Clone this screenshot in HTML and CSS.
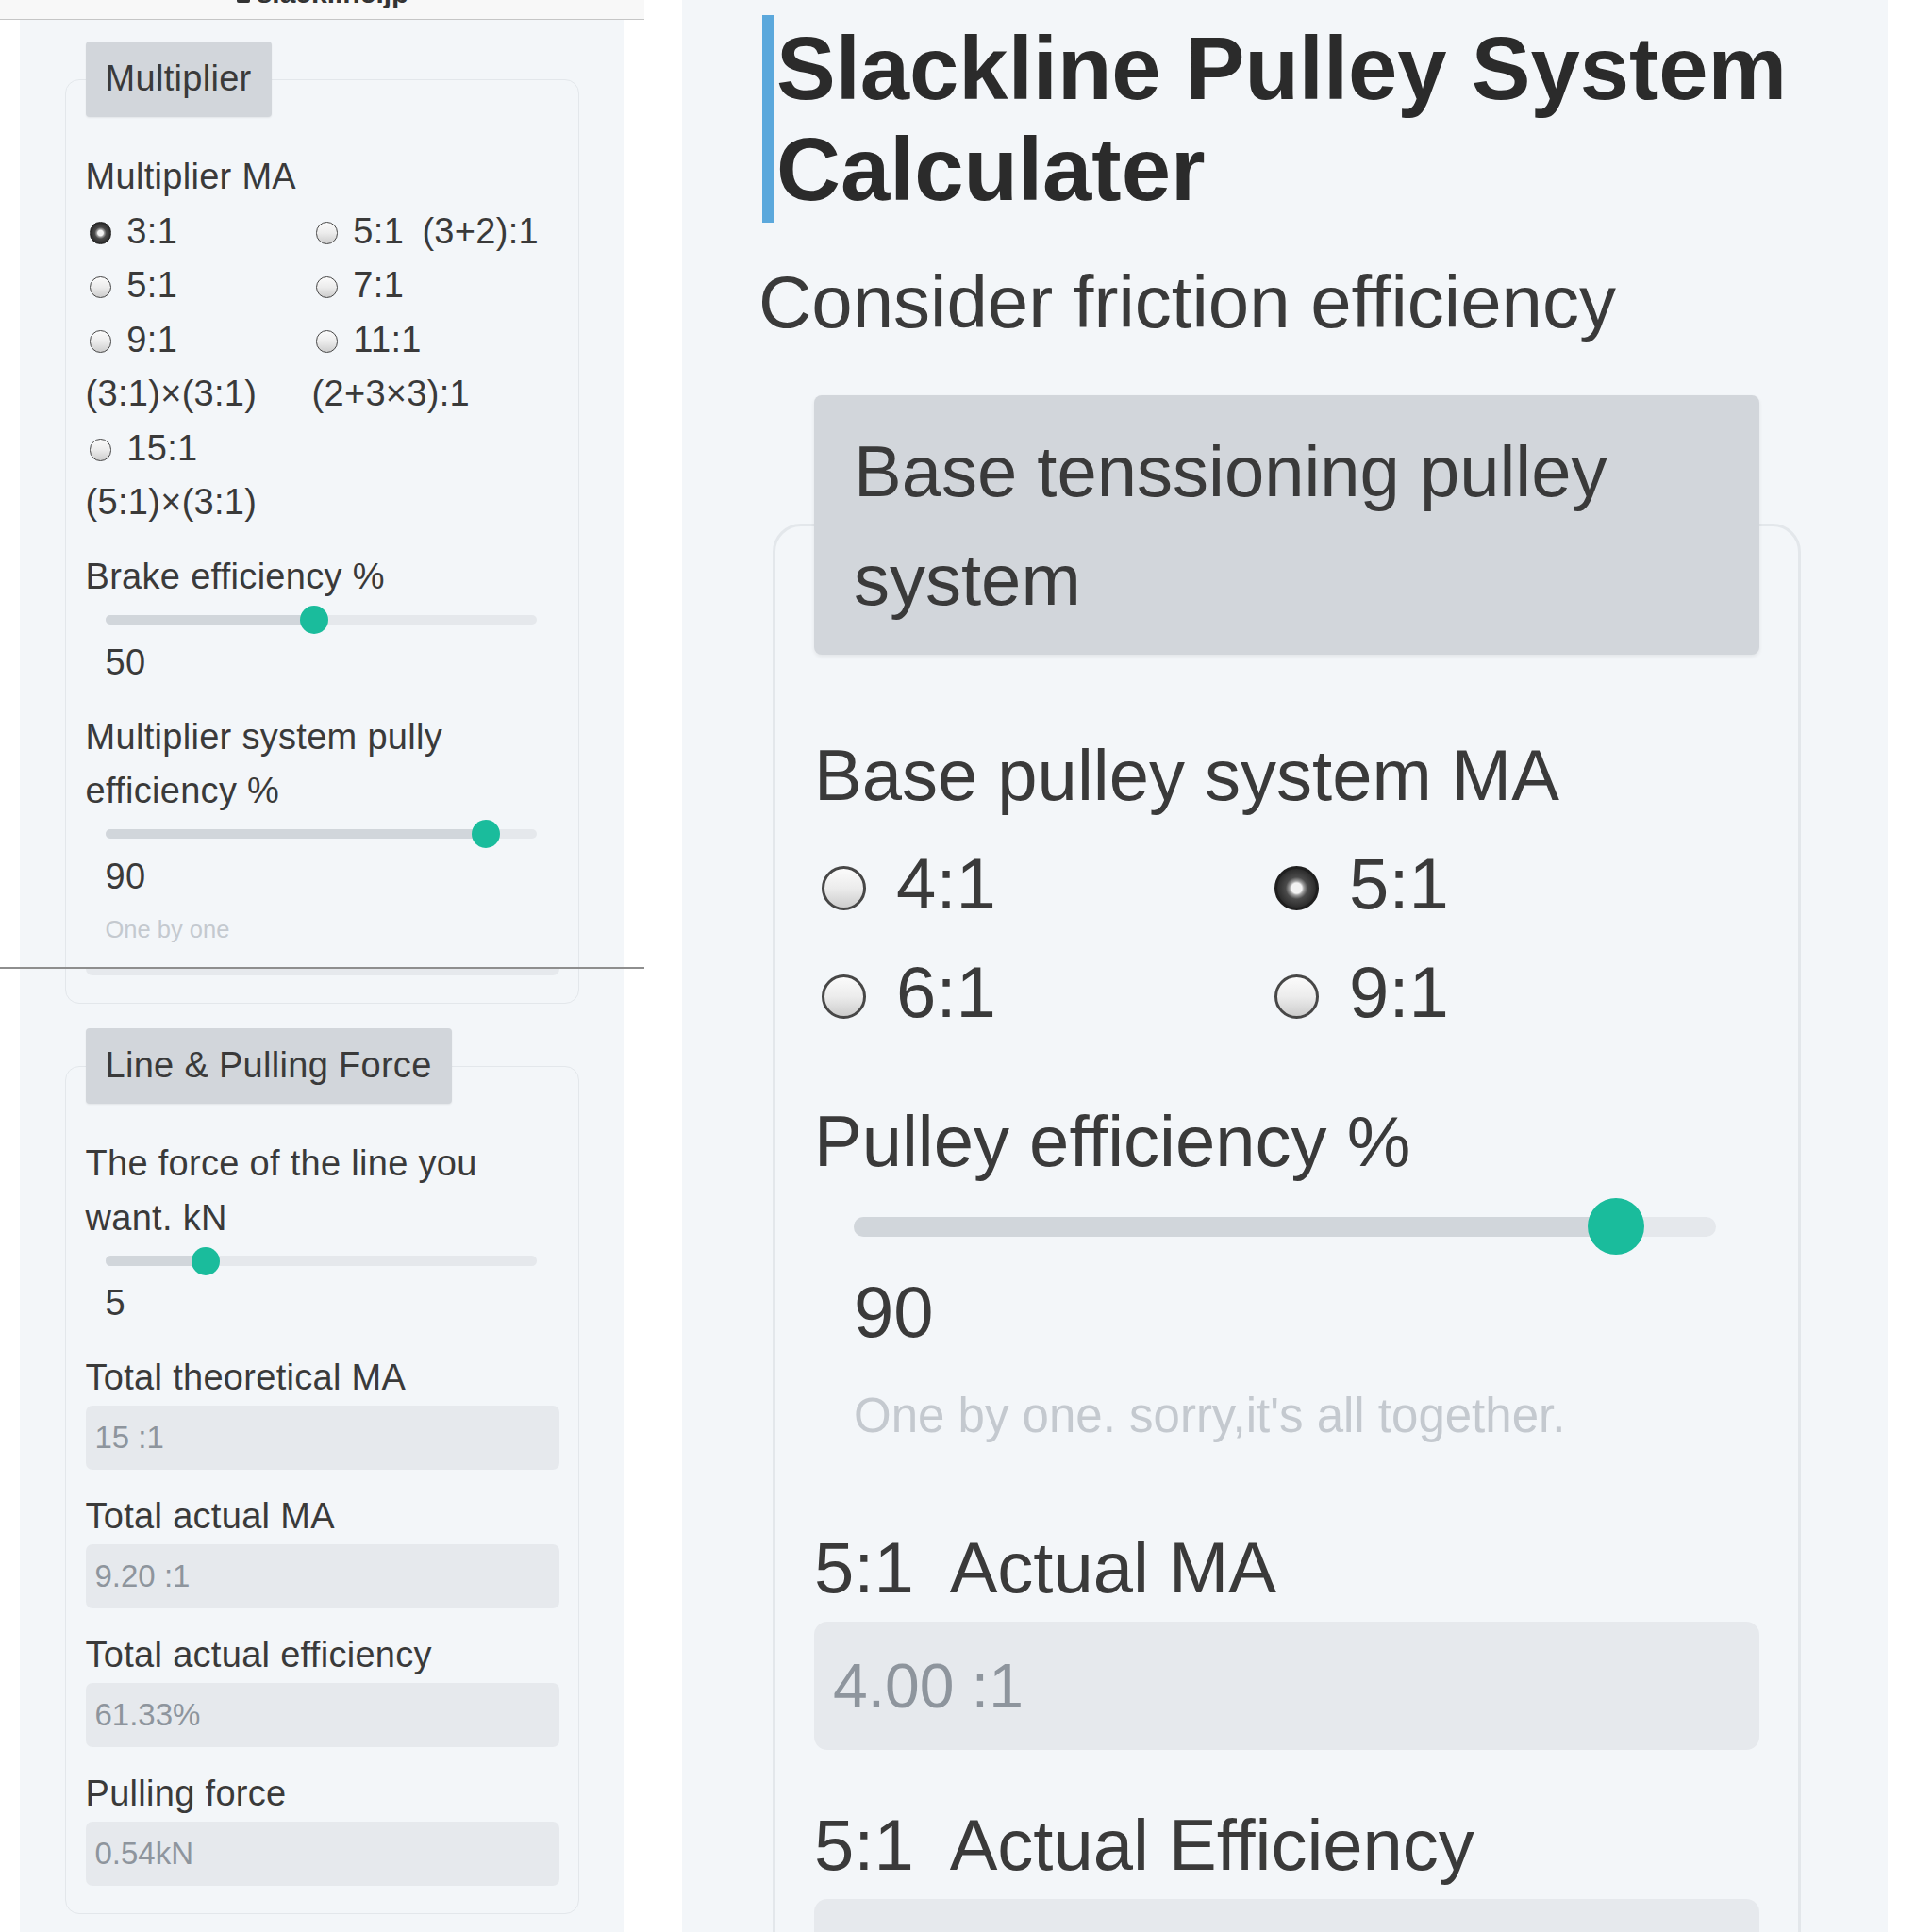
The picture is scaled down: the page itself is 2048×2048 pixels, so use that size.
FILE: index.html
```html
<!DOCTYPE html>
<html lang="en">
<head>
<meta charset="utf-8">
<title>Slackline Pulley System Calculater</title>
<link rel="stylesheet" href="styles.css">
</head>
<body>
<div class="canvas">
  <section class="phone phone-left">
    <div class="urlbar">
      <span class="url"><svg class="lock" viewBox="0 0 16 20" width="16" height="20"><rect x="1" y="8" width="14" height="11" rx="2" fill="#333"/><path d="M4 8V5.5a4 4 0 0 1 8 0V8" fill="none" stroke="#333" stroke-width="2"/></svg> slackline.jp</span>
    </div>
    <div class="page page-left">
      <fieldset class="card">
        <legend class="card-title">Multiplier</legend>
        <div class="group">
          <div class="label">Multiplier MA</div>
          <div class="radios">
            <label class="opt"><input type="radio" name="mul" class="radio" checked> 3:1</label>
            <label class="opt"><input type="radio" name="mul" class="radio"> 5:1&ensp;(3+2):1</label>
            <label class="opt"><input type="radio" name="mul" class="radio"> 5:1</label>
            <label class="opt"><input type="radio" name="mul" class="radio"> 7:1</label>
            <label class="opt"><input type="radio" name="mul" class="radio"> 9:1 (3:1)×(3:1)</label>
            <label class="opt"><input type="radio" name="mul" class="radio"> 11:1 (2+3×3):1</label>
            <label class="opt"><input type="radio" name="mul" class="radio"> 15:1 (5:1)×(3:1)</label>
          </div>
        </div>
        <div class="group">
          <div class="label">Brake efficiency %</div>
          <div class="slider"><div class="track"><div class="fill" style="width:48.4%"></div></div><div class="thumb" style="left:48.4%"></div></div>
          <div class="value">50</div>
        </div>
        <div class="group">
          <div class="label">Multiplier system pully efficiency %</div>
          <div class="slider"><div class="track"><div class="fill" style="width:88.4%"></div></div><div class="thumb" style="left:88.4%"></div></div>
          <div class="value">90</div>
          <div class="hint">One by one</div>
          <div class="stub"></div>
        </div>
      </fieldset>

      <fieldset class="card card-next">
        <legend class="card-title">Line &amp; Pulling Force</legend>
        <div class="group">
          <div class="label">The force of the line you want. kN</div>
          <div class="slider"><div class="track"><div class="fill" style="width:23.4%"></div></div><div class="thumb" style="left:23.4%"></div></div>
          <div class="value">5</div>
        </div>
        <div class="group">
          <div class="label">Total theoretical MA</div>
          <div class="out">15 :1</div>
        </div>
        <div class="group">
          <div class="label">Total actual MA</div>
          <div class="out">9.20 :1</div>
        </div>
        <div class="group">
          <div class="label">Total actual efficiency</div>
          <div class="out">61.33%</div>
        </div>
        <div class="group">
          <div class="label">Pulling force</div>
          <div class="out">0.54kN</div>
        </div>
      </fieldset>
    </div>
    <div class="seam"></div>
  </section>

  <section class="phone phone-right">
    <div class="page page-right">
      <h1 class="title">Slackline Pulley System Calculater</h1>
      <p class="sub">Consider friction efficiency</p>
      <fieldset class="card">
        <legend class="card-title">Base tenssioning pulley system</legend>
        <div class="group">
          <div class="label">Base pulley system MA</div>
          <div class="radios">
            <label class="opt"><input type="radio" name="base" class="radio"> 4:1</label>
            <label class="opt"><input type="radio" name="base" class="radio" checked> 5:1</label>
            <label class="opt"><input type="radio" name="base" class="radio"> 6:1</label>
            <label class="opt"><input type="radio" name="base" class="radio"> 9:1</label>
          </div>
        </div>
        <div class="group">
          <div class="label">Pulley efficiency %</div>
          <div class="slider"><div class="track"><div class="fill" style="width:88.4%"></div></div><div class="thumb" style="left:88.4%"></div></div>
          <div class="value">90</div>
          <div class="hint">One by one. sorry,it's all together.</div>
        </div>
        <div class="group">
          <div class="label">5:1&ensp;Actual MA</div>
          <div class="out">4.00 :1</div>
        </div>
        <div class="group">
          <div class="label">5:1&ensp;Actual Efficiency</div>
          <div class="out"></div>
        </div>
      </fieldset>
    </div>
  </section>
</div>
</body>
</html>
```

FILE: styles.css
```css
* { box-sizing: border-box; }

html, body {
  margin: 0;
  padding: 0;
  background: #ffffff;
}

body {
  font-family: "Liberation Sans", Arial, sans-serif;
  color: #3a3a3a;
}

.canvas {
  width: 2048px;
  height: 2048px;
  display: flex;
  overflow: hidden;
  background: #ffffff;
}

.phone {
  flex: none;
  height: 2048px;
  overflow: hidden;
}

.phone-left {
  --u: 1px;
  --ls: 0.3px;
  width: 683px;
  position: relative;
}

.phone-right {
  --u: 2px;
  --ls: 0px;
  width: 1278px;
  margin-left: 40px;
  background: #f3f6f9;
}

/* browser url bar (cut off at top) */
.urlbar {
  height: 20.5px;
  background: #f8f8f8;
  border-bottom: 1.5px solid #c6c6c6;
  display: flex;
  justify-content: center;
  align-items: flex-start;
  overflow: hidden;
}

.url {
  font-size: 30px;
  line-height: 30px;
  height: 30px;
  margin-top: -22px;
  font-weight: bold;
  color: #333;
  display: flex;
  align-items: flex-end;
  gap: 6px;
}

.lock {
  display: block;
  margin-bottom: 4px;
}

.seam {
  position: absolute;
  left: 0;
  top: 1025px;
  width: 683px;
  height: 1.5px;
  background: #8e8e8e;
}

.page-left {
  margin-left: 21px;
  width: 640px;
  height: 2028px;
  background: #f3f6f9;
  padding-top: 23.5px;
}

.page-right {
  padding-top: 16px;
}

/* header (right) */
.title {
  margin: 0 0 0 85px;
  padding: 2.5px 0 3.5px 3px;
  border-left: 12px solid #5ba8dc;
  font-weight: bold;
  font-size: 94px;
  line-height: 107px;
  color: #2b2b2b;
  max-width: 1120px;
}

.sub {
  margin: 25.5px 0 0 81px;
  font-size: 78px;
  line-height: 117px;
  color: #3a3a3a;
}

/* cards */
.card {
  margin: 0 0 0 calc(48 * var(--u));
  width: calc(545 * var(--u));
  min-width: 0;
  border: calc(1.5 * var(--u)) solid #e3e7eb;
  border-radius: calc(15 * var(--u));
  padding: calc(35 * var(--u)) calc(20.5 * var(--u)) calc(29.5 * var(--u));
}

.phone-right .card {
  margin-top: calc(20.25 * var(--u));
}

.card-next {
  margin-top: calc(26 * var(--u));
}

.card-title {
  padding: calc(11.25 * var(--u)) calc(21 * var(--u));
  margin: 0;
  background: #d2d6db;
  border-radius: calc(4 * var(--u));
  box-shadow: 0 calc(1 * var(--u)) calc(2 * var(--u)) rgba(0, 0, 0, 0.07);
  font-size: calc(38 * var(--u));
  line-height: calc(57.5 * var(--u));
  letter-spacing: var(--ls);
  color: #3a3a3a;
}

.group {
  margin-bottom: calc(21.5 * var(--u));
}

.group:last-child {
  margin-bottom: 0;
}

.label,
.opt,
.value {
  font-size: calc(38 * var(--u));
  line-height: calc(57.5 * var(--u));
  letter-spacing: var(--ls);
  color: #3a3a3a;
}

.radios {
  display: grid;
  grid-template-columns: calc(240 * var(--u)) 1fr;
}

.radio {
  -webkit-appearance: none;
  appearance: none;
  width: calc(23.5 * var(--u));
  height: calc(23.5 * var(--u));
  margin: 0 calc(5.5 * var(--u)) 0 calc(4 * var(--u));
  border-radius: 50%;
  border: calc(1.8 * var(--u)) solid #474747;
  background: linear-gradient(#fbfbfb, #ececec 50%, #cdcdcd);
  vertical-align: middle;
  position: relative;
  top: calc(-0.5 * var(--u));
}

.radio:checked {
  border-color: #1f1f1f;
  background: radial-gradient(circle, #f2f2f2 0 19%, #a0a0a0 26%, #4a4a4a 40%, #2a2a2a 72%);
}

/* slider */
.slider {
  position: relative;
  height: calc(33 * var(--u));
  margin-left: calc(21 * var(--u));
  width: calc(457 * var(--u));
  display: flex;
  align-items: center;
}

.track {
  width: 100%;
  height: calc(10.5 * var(--u));
  border-radius: calc(5.25 * var(--u));
  background: #e5e8ec;
  overflow: hidden;
}

.fill {
  height: 100%;
  background: #d1d6db;
}

.thumb {
  position: absolute;
  top: 50%;
  width: calc(30 * var(--u));
  height: calc(30 * var(--u));
  margin: calc(-15 * var(--u)) 0 0 calc(-15 * var(--u));
  border-radius: 50%;
  background: #1abc9c;
}

.value {
  padding-left: calc(21 * var(--u));
}

.hint {
  padding-left: calc(21 * var(--u));
  padding-bottom: calc(11 * var(--u));
  margin-top: calc(7.5 * var(--u));
  font-size: calc(25.5 * var(--u));
  line-height: calc(38 * var(--u));
  color: #c4c9cf;
}

.stub {
  margin-top: calc(11 * var(--u));
  height: calc(8 * var(--u));
  background: #e6e9ed;
  border-radius: 0 0 calc(7 * var(--u)) calc(7 * var(--u));
}

/* read-only outputs */
.out {
  height: calc(68 * var(--u));
  border-radius: calc(7 * var(--u));
  background: #e6e9ed;
  color: #8e959d;
  font-size: calc(33 * var(--u));
  padding-left: calc(10 * var(--u));
  display: flex;
  align-items: center;
}
```
